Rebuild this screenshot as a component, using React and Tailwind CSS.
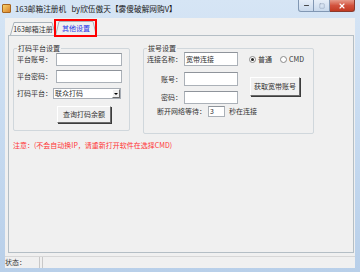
import { X, Minus, Square } from 'lucide-react'

function TextBox({ className = '', children }) {
  return (
    <div
      className={`bg-white border border-[#abb1b8] border-t-[#8f949b] flex items-center pl-[1px] leading-none ${className}`}
    >
      {children}
    </div>
  )
}

function Button({ className = '', children }) {
  return (
    <div
      className={`flex items-center justify-center bg-[#f0f0f0] border border-t-white border-l-white border-r-[#6b6b6b] border-b-[#6b6b6b] shadow-[1px_1px_0_#3c3c3c] leading-none ${className}`}
    >
      {children}
    </div>
  )
}

function Radio({ checked, label }) {
  return (
    <div className="flex items-center gap-[2px] leading-none">
      <div className="w-[7px] h-[7px] rounded-full border border-[#8a8a8a] bg-white flex items-center justify-center">
        {checked && <div className="w-[3px] h-[3px] rounded-full bg-[#222]" />}
      </div>
      <span>{label}</span>
    </div>
  )
}

function GroupBox({ title, className = '', children }) {
  return (
    <div className={`relative border border-[#d0d7dc] rounded-[2px] ${className}`}>
      <span className="absolute -top-[5px] left-[3px] px-[1px] bg-[#f0f0f0] leading-[9px]">
        {title}
      </span>
      {children}
    </div>
  )
}

export default function App() {
  return (
    <div className="w-[360px] h-[272px] flex flex-col overflow-hidden bg-gradient-to-b from-[#d6e5f5] via-[#c6daf0] to-[#b8cfe9] font-['Noto_Sans_CJK_SC',sans-serif] text-[7px] text-[#333]">
      {/* Title bar */}
      <div className="h-[18px] flex items-start shrink-0">
        <div className="mt-[4px] ml-[2px] w-[9px] h-[9px] rounded-[1px] bg-gradient-to-br from-[#f6d36a] to-[#d9822b] border border-[#a8651e]" />
        <div className="mt-[4px] ml-[4px] text-[7.7px] leading-[9px] text-[#1b1b1b] whitespace-pre">
          163邮箱注册机   by欣伍傲天【雾傻破解网购V】
        </div>
        <div className="ml-auto mr-[5px] flex h-[12px]">
          <div className="w-[16px] flex items-center justify-center border border-[#8197b3] border-t-0 rounded-bl-[3px] bg-gradient-to-b from-[#e6eef8] to-[#c9d9ec]">
            <Minus size={7} strokeWidth={3} color="#333" />
          </div>
          <div className="w-[16px] flex items-center justify-center border border-l-0 border-[#8197b3] border-t-0 bg-gradient-to-b from-[#e6eef8] to-[#c9d9ec]">
            <Square size={6} strokeWidth={2} color="#8a9bb2" />
          </div>
          <div className="w-[25px] flex items-center justify-center border border-l-0 border-[#8c3a2c] border-t-0 rounded-br-[3px] bg-gradient-to-b from-[#e59a8a] via-[#d2523e] to-[#c23a22]">
            <X size={8} strokeWidth={3.5} color="#fff" />
          </div>
        </div>
      </div>

      {/* Client area */}
      <div className="mx-[5px] flex-1 bg-[#f0f0f0] flex flex-col">
        {/* Tabs */}
        <div className="h-[17px] flex items-end pl-[5px] shrink-0">
          <div className="relative w-[46px] h-[13px] flex items-center justify-center">
            <svg className="absolute inset-0" width="46" height="13" viewBox="0 0 46 13">
              <path d="M0.5 13 L4 0.5 L42 0.5 L45.5 13" fill="#f4f4f4" stroke="#a9b3bb" />
            </svg>
            <span className="relative leading-none pt-[1px]">163邮箱注册</span>
          </div>
          <div className="relative -ml-[1px] w-[42px] h-[16px] flex items-center justify-center mb-[-1px]">
            <svg className="absolute inset-0" width="42" height="16" viewBox="0 0 42 16">
              <path d="M0.5 16 L4 1.5 L38 1.5 L41.5 16" fill="#f0f0f0" stroke="#a9b3bb" />
            </svg>
            <span className="relative leading-none text-[#1f35e8]">其他设置</span>
            <div className="absolute -left-[1px] -top-[1px] w-[43px] h-[18px] border-2 border-[#ff0000]" />
          </div>
        </div>

        {/* Tab panel */}
        <div className="ml-[3px] mr-[1px] h-[218px] border border-[#b4bec5] shrink-0">
          <div className="flex items-start mt-[12px] ml-[4px]">
            <GroupBox title="打码平台设置" className="w-[117px] h-[83px]">
              <div className="flex flex-col pt-[4px] pl-[3px]">
                <div className="flex items-center h-[13px]">
                  <span className="w-[39px] leading-none">平台账号：</span>
                  <TextBox className="w-[66px] h-[13px]" />
                </div>
                <div className="flex items-center h-[13px] mt-[4px]">
                  <span className="w-[39px] leading-none">平台密码：</span>
                  <TextBox className="w-[66px] h-[13px]" />
                </div>
                <div className="flex items-center h-[11px] mt-[5px]">
                  <span className="w-[36px] leading-none">打码平台：</span>
                  <div className="w-[68px] h-[11px] bg-white border border-[#a7adb5] flex items-center justify-between leading-none">
                    <span className="pl-[1px]">联众打码</span>
                    <div className="w-[8px] h-[9px] bg-[#f0f0f0] border border-t-white border-l-white border-r-[#6b6b6b] border-b-[#6b6b6b] flex items-center justify-center">
                      <div className="w-0 h-0 border-l-[2px] border-r-[2px] border-t-[2px] border-l-transparent border-r-transparent border-t-black" />
                    </div>
                  </div>
                </div>
                <Button className="ml-[40px] mt-[7px] w-[54px] h-[17px]">查询打码余额</Button>
              </div>
            </GroupBox>

            <GroupBox title="拔号设置" className="ml-[13px] w-[171px] h-[86px]">
              <div className="flex flex-col pt-[3px]">
                <div className="flex items-center h-[14px]">
                  <span className="w-[38px] text-right leading-none">连接名称：</span>
                  <TextBox className="ml-[2px] w-[54px] h-[14px]">宽带连接</TextBox>
                  <div className="ml-[11px] flex items-center gap-[8px]">
                    <Radio checked label="普通" />
                    <Radio label="CMD" />
                  </div>
                </div>
                <div className="flex items-start">
                  <div className="flex flex-col">
                    <div className="flex items-center h-[14px] mt-[6px]">
                      <span className="w-[38px] text-right leading-none">账号：</span>
                      <TextBox className="ml-[2px] w-[54px] h-[14px]" />
                    </div>
                    <div className="flex items-center h-[13px] mt-[5px]">
                      <span className="w-[38px] text-right leading-none">密码：</span>
                      <TextBox className="ml-[2px] w-[54px] h-[13px]" />
                    </div>
                  </div>
                  <Button className="ml-[12px] mt-[11px] w-[50px] h-[19px]">获取宽带账号</Button>
                </div>
                <div className="flex items-center h-[11px] mt-[2px] pl-[13px]">
                  <span className="leading-none">断开网络等待：</span>
                  <TextBox className="ml-[2px] w-[17px] h-[11px]">3</TextBox>
                  <span className="ml-[4px] leading-none">秒在连接</span>
                </div>
              </div>
            </GroupBox>
          </div>
          <div className="ml-[4px] mt-[7px] text-[#ff3434] leading-[9px]">
            注意：(不会自动换IP，请重新打开软件在选择CMD)
          </div>
        </div>

        {/* Status bar */}
        <div className="mt-[3px] h-[12px] flex border-t border-[#d7d7d7] shrink-0">
          <div className="w-[35px] flex items-center border-r border-[#c8c8c8] leading-none">状态：</div>
          <div className="flex-1 ml-[2px] border-l border-[#c8c8c8]" />
        </div>
      </div>
      <div className="h-[4px] shrink-0" />
    </div>
  )
}
